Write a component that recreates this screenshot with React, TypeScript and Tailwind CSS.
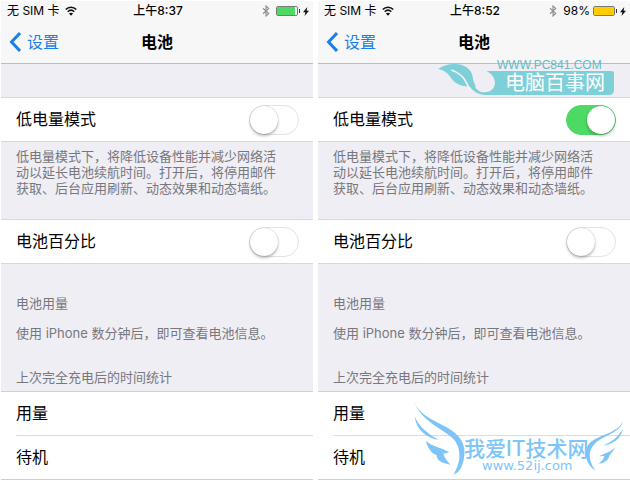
import { useId, useState } from "react"

type PhoneProps = {
    time: string
    percent?: string
    batteryClass: string
    lowPower?: boolean
}

const WifiIcon = () => (
    <svg className="w-3 h-[10px]" viewBox="0 0 24 20" fill="none" stroke="#111" strokeWidth={3.4}>
        <path d="M1.5 7C7.5 1 16.5 1 22.5 7" />
        <path d="M5.5 11.5C9.5 7.7 14.5 7.7 18.5 11.5" />
        <path d="M12 19.5L7.8 15.2C10.2 13 13.8 13 16.2 15.2Z" fill="#111" stroke="none" />
    </svg>
)

const BluetoothIcon = () => (
    <svg className="w-2 h-3 mr-[3px]" viewBox="0 0 16 24" fill="none" stroke="#8e8e93" strokeWidth={2.2}>
        <path d="M2 6.5L13.5 17L8 22V2L13.5 7L2 17.5" />
    </svg>
)

const BoltIcon = () => (
    <svg className="w-[6px] h-[9px]" viewBox="0 0 12 18" fill="#111">
        <path d="M8.5 0L0 10.5H4.8L3 18L12 7.5H7.2Z" />
    </svg>
)

const Battery = ({ fillClass }: { fillClass: string }) => (
    <div className="flex items-center gap-px">
        <div className="w-[22px] h-[10px] rounded-[2px] border border-[#77797a] bg-white overflow-hidden">
            <div className={fillClass} />
        </div>
        <div className="w-px h-1 bg-[#333]" />
    </div>
)

const Toggle = ({ label, initial = false }: { label: string; initial?: boolean }) => {
    const id = useId()
    const [on, setOn] = useState(initial)

    return (
        <div className="flex items-center justify-between h-[45px] pl-[15px] pr-[14px] bg-white border-y border-[#d8d8dc]">
            <label htmlFor={id} className="pb-0.5 text-base text-black">
                {label}
            </label>
            <input
                id={id}
                type="checkbox"
                role="switch"
                checked={on}
                onChange={(e) => setOn(e.target.checked)}
                className="appearance-none shrink-0 w-[50px] h-[30px] rounded-full border border-[#e3e3e3] bg-white checked:border-[#4cd964] checked:bg-[#4cd964] before:block before:size-7 before:rounded-full before:bg-white before:shadow-[0_2px_3px_rgba(0,0,0,0.25),0_0_1px_rgba(0,0,0,0.35)] checked:before:translate-x-5"
            />
        </div>
    )
}

const Phone = ({ time, percent, batteryClass, lowPower }: PhoneProps) => (
    <section className="bg-[#efeef4] text-[13px] text-[#77777c]">
        <header className="bg-[#f7f7f8] border-b border-[#bcbcc1] text-black">
            {/* Status bar */}
            <div className="grid grid-cols-[1fr_auto_1fr] items-center h-5 pl-[6px] pr-1 text-xs">
                <div className="flex items-center gap-[5px]">
                    <span>无 SIM 卡</span>
                    <WifiIcon />
                </div>
                <span className="font-medium">{time}</span>
                <div className="flex items-center justify-end gap-[3px]">
                    <BluetoothIcon />
                    {percent && <span>{percent}</span>}
                    <Battery fillClass={batteryClass} />
                    <BoltIcon />
                </div>
            </div>

            {/* Nav bar */}
            <nav className="grid grid-cols-[1fr_auto_1fr] items-center h-[42px] px-2 text-base">
                <a href="#settings" className="flex items-center gap-[6px] text-[#1a7fe8]">
                    <svg className="w-3 h-5" viewBox="0 0 12 20" fill="none" stroke="currentColor" strokeWidth={3}>
                        <path d="M11 1L2.5 10L11 19" />
                    </svg>
                    设置
                </a>
                <h1 className="font-bold">电池</h1>
            </nav>
        </header>

        <div className="pt-[33px]">
            <Toggle label="低电量模式" initial={lowPower} />
            <p className="max-w-[290px] px-[15px] pt-[6px] pb-[23px] leading-4">
                低电量模式下，将降低设备性能并减少网络活动以延长电池续航时间。打开后，将停用邮件获取、后台应用刷新、动态效果和动态墙纸。
            </p>
            <Toggle label="电池百分比" />
        </div>

        <div className="px-[15px] pt-[31px] pb-[6px] leading-4">
            <h2>电池用量</h2>
            <p className="pt-[14px]">使用 iPhone 数分钟后，即可查看电池信息。</p>
            <h2 className="pt-7">上次完全充电后的时间统计</h2>
        </div>

        <ul className="pl-[15px] bg-white border-y border-[#d0d0d4] text-base text-black">
            <li className="flex items-center h-11 pb-0.5 border-b border-[#dcdcdf]">用量</li>
            <li className="flex items-center h-[43px] pb-0.5">待机</li>
        </ul>
    </section>
)

const LeafLogo = () => (
    <svg className="absolute right-3 top-14 w-[182px] h-[42px] pointer-events-none" viewBox="0 0 182 42">
        <g transform="scale(0.33333)">
            <path
                fill="#7dd0d8"
                d="M152 45H526Q534 45 534 53V101Q534 117 518 117H150C118 116 104 98 88 74L105 62C112 92 124 109 146 109C168 108 180 92 176 74C173 60 164 53 152 45Z"
            />
            <path
                fill="#7dd0d8"
                d="M6 39C24 27 40 24 56 24C84 24 106 38 110 62C112 76 116 84 120 92C100 94 78 92 62 82C40 68 42 46 6 39Z"
            />
            <path fill="none" stroke="#f1f3f7" strokeWidth={5} d="M46 42C70 50 84 64 91 80C94 88 98 94 104 101" />
        </g>
        <text x="61" y="13" fontSize="12" fill="#69b9c1" className="font-['Liberation_Sans']">
            WWW.PC841.COM
        </text>
        <text x="69" y="34" fontSize="20" fill="#fff">
            电脑百事网
        </text>
    </svg>
)

const WingLogo = () => (
    <svg className="absolute right-1 top-[398px] w-[216px] h-20 pointer-events-none" viewBox="0 0 216 80">
        <g transform="scale(0.33333)" fill="#7dc5f8">
            <path d="M12 12C28 50 66 64 110 88C150 110 170 140 162 180C157 210 146 224 130 230C150 200 156 160 136 130C112 96 36 76 12 12Z" />
            <path d="M14 55C26 84 48 104 86 126C50 120 18 96 14 55Z" />
            <path d="M48 128C66 146 94 148 118 163L100 167C104 180 112 190 122 200C96 196 80 188 80 172C62 164 52 148 48 128Z" />
            <g transform="translate(510 42)">
                <path d="M131 25C122 58 84 68 58 84C28 104 18 134 46 175C14 156 10 110 30 92C56 68 112 66 131 25Z" />
                <path d="M129 50C122 82 98 96 68 101C94 90 114 76 129 50Z" />
                <path d="M106 104C98 122 90 124 86 138C80 148 68 155 56 155C66 148 72 140 73 132L58 133C74 122 92 122 106 104Z" />
            </g>
        </g>
        <text x="54" y="58" fontSize="21" fill="#7dc5f8" className="font-medium">
            我爱IT技术网
        </text>
        <text x="72" y="72" fontSize="13" fill="#7dc5f8" className="font-['DejaVu_Sans']">
            www.52ij.com
        </text>
    </svg>
)

const App = () => (
    <main
        lang="zh-CN"
        className="relative grid grid-cols-2 gap-[5px] pt-px pl-px bg-white font-[Inter,'Noto_Sans_CJK_SC',sans-serif]"
    >
        <Phone time="上午8:37" batteryClass="w-[18px] h-full bg-[#4cd964]" />
        <Phone time="上午8:52" percent="98%" batteryClass="w-full h-full bg-[#fc0]" lowPower />
        <LeafLogo />
        <WingLogo />
    </main>
)

export default App
